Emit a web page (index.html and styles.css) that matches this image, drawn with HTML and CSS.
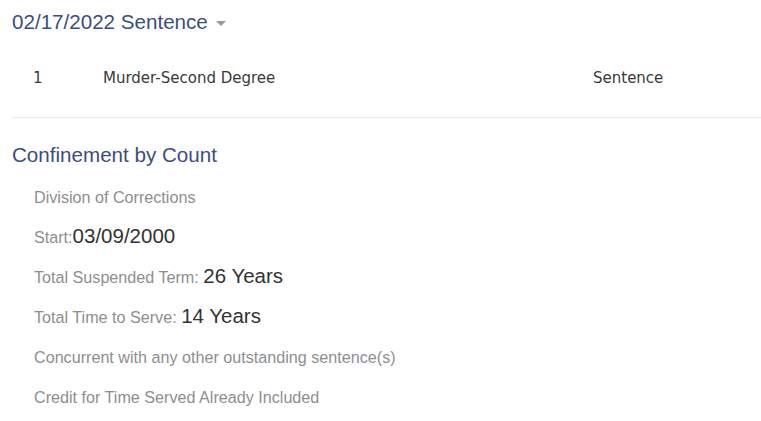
FILE: index.html
```html
<!DOCTYPE html>
<html>
<head>
<meta charset="utf-8">
<link rel="stylesheet" href="styles.css">
</head>
<body>
<div class="page">
  <h2 class="title">02/17/2022 Sentence <span class="caret"></span></h2>
  <div class="count-row">
    <span class="num">1</span>
    <span class="desc">Murder-Second Degree</span>
    <span class="kind">Sentence</span>
  </div>
  <h2 class="title sub">Confinement by Count</h2>
  <ul class="details">
    <li class="label">Division of Corrections</li>
    <li class="label">Start:<span class="value">03/09/2000</span></li>
    <li class="label">Total Suspended Term: <span class="value">26 Years</span></li>
    <li class="label">Total Time to Serve: <span class="value">14 Years</span></li>
    <li class="label">Concurrent with any other outstanding sentence(s)</li>
    <li class="label">Credit for Time Served Already Included</li>
  </ul>
</div>
</body>
</html>
```
FILE: styles.css
```css
html, body { margin: 0; padding: 0; background: #fff; }
.page {
  padding-left: 12px;
  font-family: "Liberation Sans", Arial, sans-serif;
}
.title {
  margin: 10px 0 0 0;
  font-size: 20.6px;
  line-height: 24px;
  font-weight: normal;
  color: #3b4e80;
  display: flex;
  align-items: center;
}
.caret {
  display: inline-block;
  width: 0; height: 0;
  margin-left: 8px;
  margin-top: 2px;
  border-left: 5px solid transparent;
  border-right: 5px solid transparent;
  border-top: 5px solid #999;
}
.count-row {
  margin-top: 34px;
  padding-left: 21px;
  padding-bottom: 29px;
  border-bottom: 1px solid #eaeaea;
  display: grid;
  grid-template-columns: 70px 490px 1fr;
  font-family: "DejaVu Sans", sans-serif;
  font-size: 15px;
  line-height: 20px;
  color: #3a3a3a;
}
.sub { margin-top: 25px; }
.details {
  list-style: none;
  margin: 10px 0 0 0;
  padding: 0 0 0 22px;
}
.label {
  font-size: 16.15px;
  line-height: 40px;
  height: 40px;
  color: #8e8e8e;
}
.value {
  font-size: 20.5px;
  line-height: 1;
  color: #333;
}
```
